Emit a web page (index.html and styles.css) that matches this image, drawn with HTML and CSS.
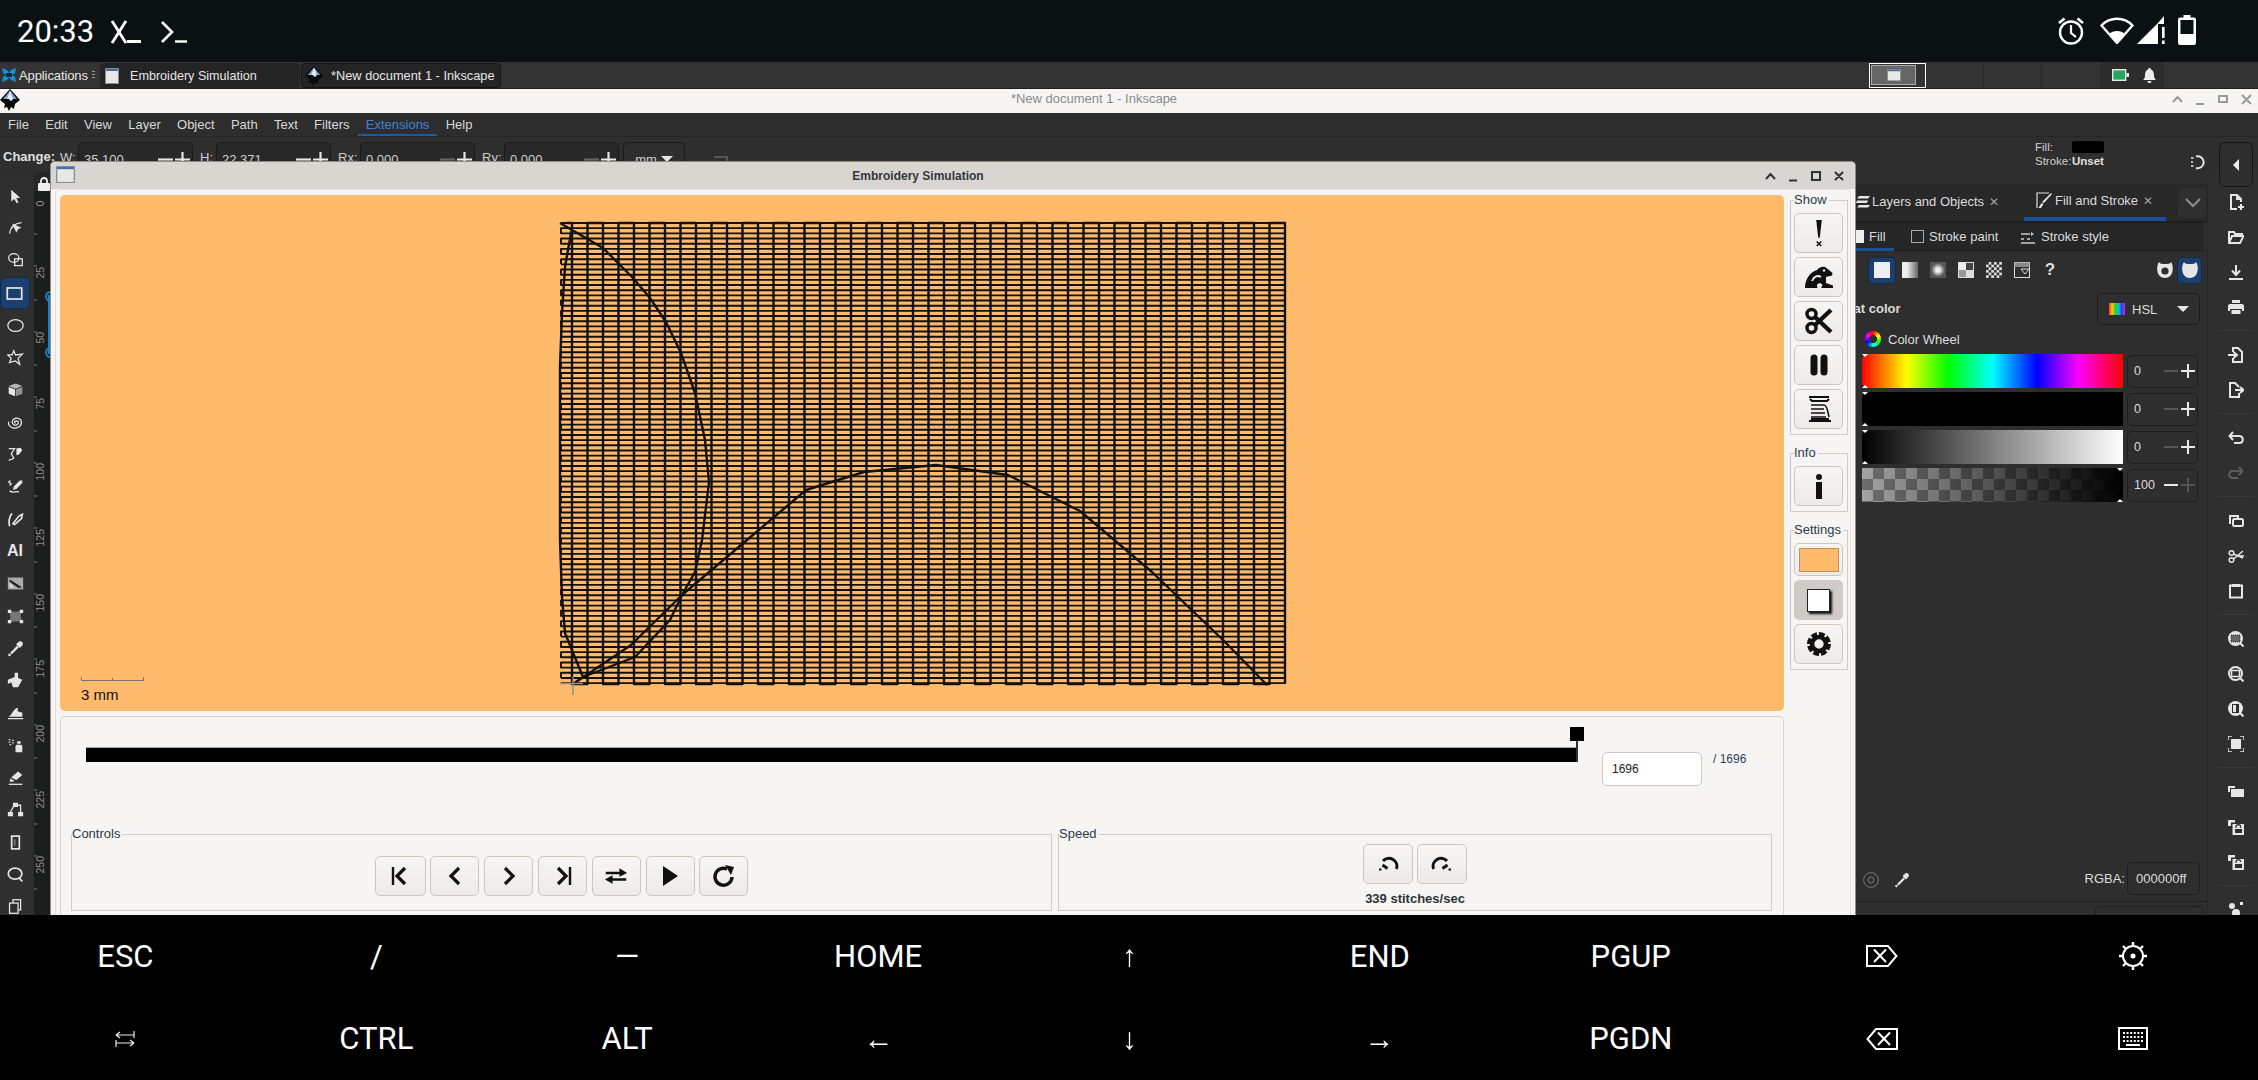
FILE: index.html
```html
<!DOCTYPE html>
<html lang="en">
<head>
<meta charset="utf-8">
<title>Embroidery Simulation</title>
<link rel="stylesheet" href="styles.css">
</head>
<body>
<svg class="sprite" aria-hidden="true">
  <symbol id="minus" viewBox="0 0 14 14"><path d="M0 7h14" stroke="currentColor" stroke-width="2"/></symbol>
  <symbol id="plus" viewBox="0 0 14 14"><path d="M0 7h14M7 0v14" stroke="currentColor" stroke-width="2"/></symbol>
  <symbol id="win" viewBox="0 0 14 16" preserveAspectRatio="none"><rect width="14" height="16" fill="#e8e8e4"/><rect width="14" height="3" fill="#3d6fb4"/><rect x=".5" y=".5" width="13" height="15" fill="none" stroke="#8a9099"/></symbol>
  <symbol id="logo" viewBox="0 0 20 22"><path d="M10 0 20 11 15 15 14 20 11 18 9 22 7 18 4 19 5 15 0 11Z" fill="#0a0a0a"/><path d="M10 1.5 17 10 13 10 11 12 9 10 3 10Z" fill="#7d9ed0"/><path d="M10 1.5 13 10 11 12 9 10 7 10Z" fill="#e8eef8"/></symbol>
  <symbol id="dropper" viewBox="0 0 16 16"><path d="M10 2.5 13.5 6 12 7.5 8.5 4Z M9.5 5.5 11 7 4.5 13.5 3 12Z" fill="currentColor"/><circle cx="12.5" cy="3.5" r="2.4" fill="currentColor"/><circle cx="2.4" cy="14" r="1.2" fill="currentColor"/></symbol>
</svg>

<header class="statusbar">
  <span class="clock">20:33</span>
  <svg class="st-x" viewBox="0 0 32 24"><path d="M2 1 16 23M16 1 2 23" stroke="#fff" stroke-width="2.8"/><path d="M17 21.5h14" stroke="#fff" stroke-width="3"/></svg>
  <svg class="st-t" viewBox="0 0 28 24"><path d="M2 2 12 12 2 22" stroke="#fff" stroke-width="2.6" fill="none"/><path d="M15 21.5h12" stroke="#fff" stroke-width="2.4"/></svg>
  <span class="st-space"></span>
  <svg class="st-alarm" viewBox="0 0 28 28"><circle cx="14" cy="15.5" r="11" fill="none" stroke="#fff" stroke-width="2.4"/><path d="M14 8v8l5 4" fill="none" stroke="#fff" stroke-width="2.2"/><path d="M2 6 7.5 1.5M26 6 20.5 1.5" stroke="#fff" stroke-width="2.6"/></svg>
  <svg class="st-wifi" viewBox="0 0 34 28"><path d="M1.5 9.5C10 .5 24 .5 32.5 9.5L17 27Z" fill="none" stroke="#fff" stroke-width="2.4"/><path d="M9 18C13 14 21 14 25 18L17 27Z" fill="#fff"/></svg>
  <svg class="st-sig" viewBox="0 0 28 28"><path d="M0 28 21 7V28Z" fill="#fff"/><path d="M21 7 27 0V8H21Z" fill="#fff"/><path d="M25 11h2.6v11H25ZM25 24.5h2.6V28H25Z" fill="#fff"/><path d="M22.6 9v19" stroke="#0a1112" stroke-width="2"/></svg>
  <svg class="st-bat" viewBox="0 0 18 30"><path d="M5.5 0h7v2.5h3.5a2 2 0 0 1 2 2V28a2 2 0 0 1-2 2H2a2 2 0 0 1-2-2V4.500a2 2 0 0 1 2-2h3.500Z" fill="#fff"/><rect x="2.500" y="5" width="13" height="14" fill="#0a1112"/></svg>
</header>

<main class="desktop">
  <section class="inkscape">
    <div class="panel">
      <svg class="xfce" viewBox="0 0 16 16"><path d="M1 1 6 3 8 6 10 3 15 1 14 6 11 8 14 10 15 15 10 13 8 10 6 13 1 15 2 10 5 8 2 6Z" fill="#1192d8"/><path d="M5 6h6v4H5Z" fill="#0c2a3c"/></svg>
      <span class="apps">Applications</span>
      <span class="grip"></span>
      <div class="task"><svg class="task-ic"><use href="#win"/></svg><span>Embroidery Simulation</span></div>
      <div class="task task-2"><svg class="task-logo"><use href="#logo"/></svg><span>*New document 1 - Inkscape</span></div>
      <div class="pager"><div class="pager-in"><svg class="pager-ic"><use href="#win"/></svg></div></div>
      <span class="pn-sep pn-sep-a"></span>
      <span class="pn-sep pn-sep-b"></span>
      <div class="tray">
        <svg class="tray-bat" viewBox="0 0 17 12"><rect x=".7" y=".7" width="13" height="10.600" fill="#1fa85c" stroke="#e8e8e8" stroke-width="1.400"/><rect x="14.500" y="4" width="2.500" height="4" fill="#e8e8e8"/></svg>
        <svg class="tray-bell" viewBox="0 0 13 15"><path d="M6.500 0C7.500 0 8 .7 8 1.500 10.500 2.500 11 5 11 7.500 11 10 12 11 13 12H0C1 11 2 10 2 7.500 2 5 2.500 2.500 5 1.500 5 .7 5.500 0 6.500 0ZM4.500 13h4C8.500 14.500 7.500 15 6.500 15S4.500 14.500 4.500 13Z" fill="#eee"/></svg>
      </div>
    </div>

    <div class="titlebar">
      <svg class="tb-logo"><use href="#logo"/></svg>
      <span class="tb-title">*New document 1 - Inkscape</span>
      <svg class="tb-btns" viewBox="0 0 80 12"><path d="M1 9 5.500 4 10 9M24 11H32M47 3H55V9H47ZM70 2 79 11M79 2 70 11" fill="none" stroke="#9a9a9a" stroke-width="2"/></svg>
    </div>

    <nav class="menubar">
      <span class="mi">File</span><span class="mi">Edit</span><span class="mi">View</span><span class="mi">Layer</span><span class="mi">Object</span><span class="mi">Path</span><span class="mi">Text</span><span class="mi">Filters</span><span class="mi mi-on">Extensions</span><span class="mi">Help</span>
    </nav>

    <div class="toolrow">
      <b class="tr-change">Change:</b>
      <span class="tr-l">W:</span>
      <div class="tr-f"><span>35.100</span><svg class="tr-pm"><use href="#minus"/></svg><svg class="tr-pm"><use href="#plus"/></svg></div>
      <span class="tr-l tr-h">H:</span>
      <div class="tr-f"><span>22.371</span><svg class="tr-pm"><use href="#minus"/></svg><svg class="tr-pm"><use href="#plus"/></svg></div>
      <span class="tr-l tr-r">Rx:</span>
      <div class="tr-f"><span>0.000</span><svg class="tr-pm dim"><use href="#minus"/></svg><svg class="tr-pm"><use href="#plus"/></svg></div>
      <span class="tr-l tr-r">Ry:</span>
      <div class="tr-f"><span>0.000</span><svg class="tr-pm dim"><use href="#minus"/></svg><svg class="tr-pm"><use href="#plus"/></svg></div>
      <div class="tr-unit">mm <i class="caret"></i></div>
      <svg class="tr-snap" viewBox="0 0 14 14"><path d="M0 1H13V14" fill="none" stroke="#666" stroke-width="1.500"/></svg>
      <span class="tr-space"></span>
      <div class="fs-ind">
        <span>Fill:</span><i class="fs-swatch"></i>
        <span>Stroke:</span><b>Unset</b>
      </div>
      <svg class="snap" viewBox="0 0 16 16"><path d="M6 2.500A6 6 0 1 1 6 14" fill="none" stroke="#e6e6e6" stroke-width="2"/><path d="M1 4h2.500M1 8h2M1 12h2.500" stroke="#e6e6e6" stroke-width="1.500"/></svg>
      <div class="collapse"><i class="tri-left"></i></div>
    </div>

    <div class="workspace">
      <aside class="tools">
        <div class="tool"><svg viewBox="0 0 20 20"><path class="f" d="M5 2V16L8.500 13 11.500 18 13.500 17 11 12 15.500 11.500Z"/></svg></div>
        <div class="tool"><svg viewBox="0 0 20 20"><path class="s" d="M3 16C4 8 8 4 17 3"/><path class="f" d="M6 4 17 9 13 11 11 15Z"/></svg></div>
        <div class="tool"><svg viewBox="0 0 20 20"><ellipse class="s" cx="8" cy="7" rx="6" ry="5"/><rect class="s" x="9" y="8" width="9" height="8"/></svg></div>
        <div class="tool tool-on"><svg viewBox="0 0 20 20"><rect class="s2" x="1.500" y="3.500" width="17" height="13"/></svg></div>
        <div class="tool"><svg viewBox="0 0 20 20"><ellipse class="s" cx="10" cy="10" rx="9" ry="7"/></svg></div>
        <div class="tool"><svg viewBox="0 0 20 20"><path class="s" d="M8 2 10 7 18 6 13 11 15 18 9.500 14 3 16 5 11 1 7 6 7Z"/></svg></div>
        <div class="tool"><svg viewBox="0 0 20 20"><path class="f" d="M10 3 18 6 10 9 2 6Z" opacity=".75"/><path class="f" d="M2 7 9.500 10V18L2 15Z"/><path class="f" d="M18 7V15L10.500 18V10Z" opacity=".55"/></svg></div>
        <div class="tool"><svg viewBox="0 0 20 20"><path class="s" d="M10 11C8 10 9 8 11 8 14 8 14 12 11 13 7 14 5 10 7 7 10 3 17 5 17 10 17 15 11 18 6 16 3 15 1 12 2 9"/></svg></div>
        <div class="tool"><svg viewBox="0 0 20 20"><path class="s" d="M2 3H9L5 9 8 14C6 17 3 15 2 17"/><path class="f" d="M11 3 16 2 18 5 14 10 11 11Z"/></svg></div>
        <div class="tool"><svg viewBox="0 0 20 20"><path class="f" d="M8 10 15 3 18 3 18 6 11 13 7 14Z"/><path class="s" d="M4 3 2 5 5 7 3 9M3 15C6 18 9 16 14 16"/></svg></div>
        <div class="tool"><svg viewBox="0 0 20 20"><path class="s2" d="M6 3C2 6 2 14 3 18M7 15 14 6 18 4 17 9 9 16Z"/></svg></div>
        <div class="tool"><span class="tool-txt">AI</span></div>
        <div class="tool"><svg viewBox="0 0 20 20"><rect x="1" y="3" width="18" height="14" fill="#aaa"/><path d="M3 5 17 14V15H13L3 8Z" fill="#222"/><path d="M3 9 9 15H3Z" fill="#ddd"/></svg></div>
        <div class="tool"><svg viewBox="0 0 20 20"><path d="M3 4H17L16 10 18 16H3L4 10Z" fill="#777"/><path class="f" d="M1 2h4v4H1ZM15 2h4v4h-4ZM1 14h4v4H1ZM15 14h4v4h-4Z"/></svg></div>
        <div class="tool"><svg viewBox="0 0 20 20"><use href="#dropper"/></svg></div>
        <div class="tool"><svg viewBox="0 0 20 20"><path class="f" d="M1 9 9 6 9 1 13 1 13 7 18 9 13 18 7 18 5 12 1 14Z"/></svg></div>
        <div class="tool"><svg viewBox="0 0 20 20"><path class="f" d="M1 15C5 15 6 8 11 5 13 4 14 6 12 8 14 9 16 10 18 10V15ZM1 16.500H19V18H1Z"/></svg></div>
        <div class="tool"><svg viewBox="0 0 20 20"><path class="f" d="M11 9H17L18 11V18H10V11ZM12 5H16V8H12Z"/><path d="M2 3h2M6 4h2M2 6h2M6 7h2M3 9h2" stroke="#ddd" stroke-width="1.400"/></svg></div>
        <div class="tool"><svg viewBox="0 0 20 20"><path class="f" d="M13 3 18 7 11 13 5 10Z"/><path d="M4 11 9 14 7 15H3Z" fill="#ddd"/><path class="s" d="M2 18H18"/></svg></div>
        <div class="tool"><svg viewBox="0 0 20 20"><path class="f" d="M7 2h6v5H7ZM1 13h6v5H1ZM13 13h6v5h-6Z"/><path class="s" d="M8 6 4 13M13 5H16V13"/></svg></div>
        <div class="tool"><svg viewBox="0 0 20 20"><rect class="s2" x="5.500" y="2.500" width="9" height="15"/><path d="M8 6h2v8H8Z" fill="#777"/></svg></div>
        <div class="tool"><svg viewBox="0 0 20 20"><ellipse class="s2" cx="9.500" cy="9" rx="8" ry="6.500"/><path class="s2" d="M14 14 18 18"/></svg></div>
        <div class="tool"><svg viewBox="0 0 20 20"><rect class="s" x="7" y="2" width="9" height="12"/><rect x="3" y="6" width="10" height="12" fill="#2e2e2e" stroke="#e6e6e6" stroke-width="1.500"/></svg></div>
      </aside>
      <div class="rulecol">
        <div class="lock"><svg viewBox="0 0 12 14"><path d="M3 6V4a3 3 0 0 1 6 0V6" fill="none" stroke="#eee" stroke-width="1.800"/><rect y="6" width="12" height="8" rx="1" fill="#eee"/></svg></div>
        <div class="ruler">
          <span class="rk">0</span><span class="rk">25</span><span class="rk">50</span><span class="rk">75</span><span class="rk">100</span><span class="rk">125</span><span class="rk">150</span><span class="rk">175</span><span class="rk">200</span><span class="rk">225</span><span class="rk">250</span>
          <i class="rmark"></i>
        </div>
      </div>
      <div class="canvas-bg"></div>

      <section class="dock">
        <div class="dock-tabs">
          <div class="dt dt-layers">
            <svg class="dt-ic" viewBox="0 0 14 14"><path d="M3 1H14L12 3.500H1ZM1 5.500H12L11 8H0ZM3 10H14L12 12.500H1Z" fill="#e6e6e6"/></svg>
            <span>Layers and Objects</span><span class="dt-x">✕</span>
          </div>
          <div class="dt dt-fill">
            <svg class="dt-ic2" viewBox="0 0 16 17"><path d="M13 1H1V16" fill="none" stroke="#ddd" stroke-width="1.200"/><path d="M15 1 16 2 8 11 6 10ZM5.500 11 7.500 12 5 16H2.500Z" fill="#e6e6e6"/></svg>
            <span>Fill and Stroke</span><span class="dt-x">✕</span>
          </div>
          <div class="dt-more"><svg viewBox="0 0 16 10"><path d="M1 1 8 8 15 1" fill="none" stroke="#8e8e8e" stroke-width="2"/></svg></div>
        </div>
        <div class="subtabs">
          <div class="st st-on"><i class="sq sq-w"></i><span>Fill</span></div>
          <div class="st st-paint"><i class="sq"></i><span>Stroke paint</span></div>
          <div class="st st-style"><svg class="st-ic" viewBox="0 0 14 14"><path d="M0 4h9M0 9h3M6 9h3M0 13h14" stroke="#ccc" stroke-width="1.300" fill="none"/><path d="M10 2l3 2-3 2Z" fill="#ccc"/></svg><span>Stroke style</span></div>
        </div>
        <div class="modes">
          <div class="mode mode-on"><i class="flat"></i></div>
          <div class="mode"><i class="m-grad"></i></div>
          <div class="mode"><i class="m-rad"></i></div>
          <div class="mode"><i class="m-mesh"></i></div>
          <div class="mode"><i class="m-pat"></i></div>
          <div class="mode"><svg class="m-svg" viewBox="0 0 16 16"><rect x=".5" y=".5" width="15" height="15" fill="none" stroke="#ddd"/><path d="M.5 .5H15.500V5H.5Z" fill="#888"/><path d="M7 7 15 7 11 12Z" fill="none" stroke="#ddd"/></svg></div>
          <div class="mode mode-q">?</div>
          <span class="modes-space"></span>
          <div class="mode mode-rule"><svg viewBox="0 0 18 18"><path d="M3 1C0 5 0 17 9 17S18 5 15 1C14 3 12 3 9 3S4 3 3 1Z" fill="#e6e6e6"/><circle cx="9" cy="10" r="3.600" fill="#2e2e2e"/></svg></div>
          <div class="mode mode-rule mode-on"><svg viewBox="0 0 18 18"><path d="M3 1C0 5 0 17 9 17S18 5 15 1C14 3 12 3 9 3S4 3 3 1Z" fill="#e6e6e6"/></svg></div>
        </div>
        <div class="flat-row">
          <b>Flat color</b>
          <div class="dd"><i class="dd-rb"></i><span>HSL</span><i class="caret"></i></div>
        </div>
        <div class="wheel-row"><i class="wheel"></i><span>Color Wheel</span></div>
        <div class="cs-row"><div class="cs cs-h"></div><div class="spin"><span>0</span><svg class="pm dim"><use href="#minus"/></svg><svg class="pm"><use href="#plus"/></svg></div></div>
        <div class="cs-row"><div class="cs cs-s"></div><div class="spin"><span>0</span><svg class="pm dim"><use href="#minus"/></svg><svg class="pm"><use href="#plus"/></svg></div></div>
        <div class="cs-row"><div class="cs cs-l"></div><div class="spin"><span>0</span><svg class="pm dim"><use href="#minus"/></svg><svg class="pm"><use href="#plus"/></svg></div></div>
        <div class="cs-row"><div class="cs cs-a"></div><div class="spin"><span>100</span><svg class="pm"><use href="#minus"/></svg><svg class="pm dim"><use href="#plus"/></svg></div></div>
        <div class="rgba-row">
          <svg class="target" viewBox="0 0 16 16"><circle cx="8" cy="8" r="7.400" fill="none" stroke="#777"/><circle cx="8" cy="8" r="3" fill="none" stroke="#777"/></svg>
          <svg class="drop"><use href="#dropper"/></svg>
          <span class="rgba-space"></span>
          <span>RGBA:</span>
          <div class="rgba-in">000000ff</div>
        </div>
        <div class="blend-row"><div class="blend"></div></div>
      </section>

      <aside class="cmds">
        <div class="cmd"><svg viewBox="0 0 16 16"><path class="s2" d="M9 15H3V1H9L13 5V8M9 1V5H13"/><path class="s2" d="M10 13h6M13 10v6"/></svg></div>
        <div class="cmd"><svg viewBox="0 0 16 16"><path class="s2" d="M1 13V3H6L7 5H14V7M1 14H12L15.500 7H4Z"/></svg></div>
        <div class="cmd"><svg viewBox="0 0 16 16"><path class="s2" d="M8 1V10M4 6.500 8 11 12 6.500M1 15H15"/></svg></div>
        <div class="cmd"><svg viewBox="0 0 16 16"><path class="f" d="M4 1H12V4H4ZM2 5H14A2 2 0 0 1 16 7V12H14V10H2V12H0V7A2 2 0 0 1 2 5ZM3.500 11H12.500V15H3.500Z"/></svg></div>
        <i class="cmd-sep"></i>
        <div class="cmd"><svg viewBox="0 0 16 16"><path class="s2" d="M5 5V1H10L14 5V15H5V11M0 8H8M5.500 5 9 8 5.500 11"/></svg></div>
        <div class="cmd"><svg viewBox="0 0 16 16"><path class="s2" d="M11 5V5L7 1H2V15H11V11M7 8H15M12 5 15.500 8 12 11"/></svg></div>
        <i class="cmd-sep"></i>
        <div class="cmd"><svg viewBox="0 0 16 16"><path class="s2" d="M5 2 1.500 6 5 10M2 6H11C16 6 16 13 11 13H6"/></svg></div>
        <div class="cmd cmd-dim"><svg viewBox="0 0 16 16"><path class="s2" d="M11 2 14.500 6 11 10M14 6H5C0 6 0 13 5 13H10"/></svg></div>
        <i class="cmd-sep"></i>
        <div class="cmd"><svg viewBox="0 0 16 16"><path class="s2" d="M3 10H2V3H10V5"/><rect class="s2" x="5" y="6" width="10" height="7" rx="1.500"/></svg></div>
        <div class="cmd"><svg viewBox="0 0 16 16"><circle class="s" cx="3.500" cy="5" r="2.300"/><circle class="s" cx="3.500" cy="12" r="2.300"/><path class="s" d="M5.500 6 15 10M5.500 11 15 3M8 8H16"/></svg></div>
        <div class="cmd"><svg viewBox="0 0 16 16"><path class="s2" d="M4 2.500H2V14.500H14V2.500H12"/><path class="f" d="M4 1H12V4H4Z"/></svg></div>
        <i class="cmd-sep"></i>
        <div class="cmd"><svg viewBox="0 0 16 16"><circle class="f" cx="7.500" cy="7.500" r="7.500"/><rect x="3" y="4" width="9" height="7" fill="#666" stroke="#2e2e2e" stroke-dasharray="1 1"/><path class="s2" d="M12 12 15.500 15.500"/></svg></div>
        <div class="cmd"><svg viewBox="0 0 16 16"><circle class="s2" cx="7.500" cy="7.500" r="6.500"/><rect class="s" x="3.500" y="4.500" width="8" height="6"/><path class="s2" d="M12 12 15.500 15.500"/></svg></div>
        <div class="cmd"><svg viewBox="0 0 16 16"><circle class="f" cx="7.500" cy="7.500" r="7.500"/><rect x="4" y="3" width="7" height="9" fill="#2e2e2e"/><rect x="5" y="4" width="3" height="7" fill="#e6e6e6"/><path class="s2" d="M12 12 15.500 15.500"/></svg></div>
        <div class="cmd"><svg viewBox="0 0 16 16"><rect class="f" x="3" y="3" width="10" height="10"/><path class="s" d="M0 4V0H4M12 0H16V4M16 12V16H12M4 16H0V12" stroke="#999"/></svg></div>
        <i class="cmd-sep"></i>
        <div class="cmd"><svg viewBox="0 0 16 16"><path class="f" d="M0 2H7V4H2V8H0ZM3 5H16V13H3Z"/></svg></div>
        <div class="cmd"><svg viewBox="0 0 16 16"><path class="f" d="M0 1H7V3.500H3V7H0ZM4.500 5H16V16H4.500Z"/><path d="M8 9V8a2.300 2.300 0 0 1 4.600 0V9" fill="none" stroke="#2e2e2e" stroke-width="1.200"/><rect x="7" y="10" width="7" height="4" fill="#2e2e2e"/></svg></div>
        <div class="cmd"><svg viewBox="0 0 16 16"><path class="f" d="M0 1H7V3.500H3V7H0ZM4.500 5H16V16H4.500Z"/><path d="M8 9V8a2.300 2.300 0 0 1 4.600 0" fill="none" stroke="#2e2e2e" stroke-width="1.200"/><rect x="7" y="10" width="7" height="4" fill="#2e2e2e"/></svg></div>
        <i class="cmd-sep"></i>
        <div class="cmd"><svg viewBox="0 0 16 16"><circle class="f" cx="4" cy="4" r="3"/><circle class="f" cx="8" cy="11" r="4"/><path class="f" d="M12 0h3v3h-3Z"/></svg></div>
      </aside>
    </div>
  </section>

  <section class="sim">
    <div class="sim-title">
      <svg class="sim-ic"><use href="#win"/></svg>
      <b>Embroidery Simulation</b>
      <svg class="sim-btns" viewBox="0 0 80 12"><path d="M1 9 5.500 4 10 9M24 10.500H32M47 2H55V10H47ZM70 2 78 10M78 2 70 10" fill="none" stroke="#2e3436" stroke-width="2"/></svg>
    </div>
    <div class="sim-frame">
      <div class="sim-main">
        <div class="stage">
          <svg class="stitches" viewBox="60 195 1724 516">
            <defs>
              <path id="hb" class="thread thin" d="M561 223h724v5.170h-724v5.170h724v5.170h-724v5.170h724v5.170h-724v5.170h724v5.170h-724v5.170"/>
              <path id="vb" class="thread" d="M572 223v461h15.500v-461h15.500v461h15.500v-461h15.500v461h15.500v-461h15.500v461h15.500v-461h15.500"/>
            </defs>
            <use href="#hb"/><use href="#hb" y="41.360"/><use href="#hb" y="82.720"/><use href="#hb" y="124.080"/><use href="#hb" y="165.440"/><use href="#hb" y="206.800"/><use href="#hb" y="248.160"/><use href="#hb" y="289.520"/><use href="#hb" y="330.880"/><use href="#hb" y="372.240"/><use href="#hb" y="413.600"/>
            <path class="thread thin" d="M561 677.960h724v5.170h-724"/>
            <use href="#vb"/><use href="#vb" x="124"/><use href="#vb" x="248"/><use href="#vb" x="372"/><use href="#vb" x="496"/>
            <path class="thread" d="M567 223h5M1192 223v461h15.500v-461h15.500v461h15.500v-461h15.500v461h15.500v-461h15.500v461"/>
            <path class="thread" d="M560 223 603 248 633 278 650 298 666 322 681 353 695 393 705 440 709 482 702 540 695 572 682 595 670 620 635 657 583 677 573 684 631 645 682 595 747 540 806 490 864 472 936 465 1008 475 1080 511 1152 572 1224 641 1267 685M572 228 568 250 565 267 562 313 560 367 560 540 562 597 565 633 583 677"/>
            <path class="cross" d="M560 683.500H583M573 677V695"/>
            <path class="ruler-mark" d="M81.500 677V680.500H143.500V677M112.500 678V680.500"/>
            <text class="scale-txt" x="81" y="700">3 mm</text>
          </svg>
        </div>
        <div class="scrub">
          <div class="scrub-top">
            <div class="slider"><div class="bar"></div><i class="handle"></i></div>
            <div class="num">1696</div>
            <span class="of">/ 1696</span>
          </div>
          <div class="ctl-row">
            <fieldset class="frame f-ctl">
              <legend>Controls</legend>
              <div class="ctl-btns">
                <button class="btn b-first"><svg viewBox="0 0 24 24"><path d="M5 3V21" stroke-width="2.400"/><path d="M17 4 9 12 17 20" stroke-width="3.200"/></svg></button>
                <button class="btn"><svg viewBox="0 0 24 24"><path d="M16 4 8 12 16 20" stroke-width="3.200"/></svg></button>
                <button class="btn"><svg viewBox="0 0 24 24"><path d="M8 4 16 12 8 20" stroke-width="3.200"/></svg></button>
                <button class="btn"><svg viewBox="0 0 24 24"><path d="M7 4 15 12 7 20" stroke-width="3.200"/><path d="M19 3V21" stroke-width="2.400"/></svg></button>
                <button class="btn"><svg viewBox="0 0 28 24"><path d="M2 8.500H20M8 16H26" stroke-width="3"/><path class="solid" d="M18 3 27 8.500 18 13ZM10 11 1 16 10 21Z"/></svg></button>
                <button class="btn"><svg viewBox="0 0 24 24"><path class="solid" d="M5 2 20 12 5 22Z"/></svg></button>
                <button class="btn"><svg viewBox="0 0 24 24"><path d="M20 13A8.500 8.500 0 1 1 15 5" stroke-width="3.400"/><path class="solid" d="M13 1 22 3 19 11Z"/></svg></button>
              </div>
            </fieldset>
            <fieldset class="frame f-spd">
              <legend>Speed</legend>
              <div class="spd-btns">
                <button class="btn"><svg viewBox="0 0 24 24"><path d="M7 9A8 8 0 0 1 20.500 17" stroke-width="3"/><path d="M11.500 16.500 6.500 13" stroke-width="3"/><path d="M3 17.500h2.500" stroke-width="2"/></svg></button>
                <button class="btn"><svg viewBox="0 0 24 24"><path d="M3.500 17A8 8 0 0 1 17 9" stroke-width="3"/><path d="M12.500 16.500 17.500 13" stroke-width="3"/><path d="M18.500 17.500h2.500" stroke-width="2"/></svg></button>
              </div>
              <b class="spd-txt">339 stitches/sec</b>
            </fieldset>
          </div>
        </div>
      </div>
      <aside class="sim-side">
        <fieldset class="frame side-f">
          <legend>Show</legend>
          <button class="btn side-b"><svg viewBox="0 0 28 30"><path class="solid" d="M11 1H17L14.800 20H13.200Z"/><path d="M11.500 24 16.500 29M16.500 24 11.500 29" stroke-width="1.500"/></svg></button>
          <button class="btn side-b"><svg viewBox="0 0 28 22"><path class="solid" d="M0 22C0 13 5 6 12 4 14 1 19-.5 21.500 2L27.500 7 27 9.500 21 11V17L28 19.500V22H16L17.500 19C16 16.500 13 17 12 19L12.500 22Z"/><circle cx="19" cy="4.500" r="1.200" fill="#f2f1ef" stroke="none"/><path d="M7 15C9 10 13 9 16 11" stroke="#f2f1ef" stroke-width="1.800"/></svg></button>
          <button class="btn side-b"><svg viewBox="0 0 28 28"><circle cx="6.500" cy="7" r="4.500" stroke-width="3.400"/><circle cx="6.500" cy="21" r="4.500" stroke-width="3.400"/><path d="M10 18 26 3M10 10 26 25" stroke-width="4.400"/></svg></button>
          <button class="btn side-b"><svg viewBox="0 0 28 28"><path d="M9 7V21M19 7V21" stroke-width="7" stroke-linecap="round"/></svg></button>
          <button class="btn side-b"><svg viewBox="0 0 28 28"><path d="M4 2H24M5 4 7 6H22L24 4M4 26H26M6 24H24" stroke-width="2"/><path d="M6 10H19C22 10 23 17 24 22M6 14H19M6 18H20M6 22H21" stroke-width="1.600"/></svg></button>
        </fieldset>
        <fieldset class="frame side-f">
          <legend>Info</legend>
          <button class="btn side-b"><svg viewBox="0 0 28 28"><circle class="solid" cx="14" cy="5" r="3"/><path class="solid" d="M11 10H17V27H11Z"/></svg></button>
        </fieldset>
        <fieldset class="frame side-f">
          <legend>Settings</legend>
          <button class="btn side-b side-sw"><i class="swatch"></i></button>
          <button class="btn side-b side-sel"><i class="shadow-sq"></i></button>
          <button class="btn side-b"><svg viewBox="0 0 28 28"><circle cx="14" cy="14" r="7" stroke-width="4.600"/><circle cx="14" cy="14" r="10" stroke-width="4" stroke-dasharray="5.800 2"/></svg></button>
        </fieldset>
      </aside>
    </div>
  </section>
</main>

<footer class="keys">
  <span class="key">ESC</span>
  <span class="key">/</span>
  <span class="key">—</span>
  <span class="key">HOME</span>
  <span class="key key-a">↑</span>
  <span class="key">END</span>
  <span class="key">PGUP</span>
  <span class="key"><svg class="k-del" viewBox="0 0 32 22"><path d="M1 1H22L30.500 11 22 21H1Z" fill="none" stroke="#fff" stroke-width="2"/><path d="M8 4.500 20 17M20 4.500 8 17" stroke="#fff" stroke-width="2"/></svg></span>
  <span class="key"><svg class="k-gear" viewBox="0 0 28 28"><circle cx="14" cy="14" r="10" fill="none" stroke="#fff" stroke-width="2"/><circle cx="14" cy="14" r="2.500" fill="#fff"/><path d="M14 0V4M14 24V28M0 14H4M24 14H28M4 4 7 7M24 4 21 7M4 24 7 21M24 24 21 21" stroke="#fff" stroke-width="2.400"/></svg></span>
  <span class="key"><svg class="k-tab" viewBox="0 0 20 16"><path d="M1 4H19M19 0V7M1 4 5 1M1 4 5 7M19 12H1M1 9V16M19 12 15 9M19 12 15 15" fill="none" stroke="#eee" stroke-width="1.200"/></svg></span>
  <span class="key">CTRL</span>
  <span class="key">ALT</span>
  <span class="key key-a">←</span>
  <span class="key key-a">↓</span>
  <span class="key key-a">→</span>
  <span class="key">PGDN</span>
  <span class="key"><svg class="k-del" viewBox="0 0 32 22"><path d="M31 1H10L1.500 11 10 21H31Z" fill="none" stroke="#fff" stroke-width="2"/><path d="M12 4.500 24 17M24 4.500 12 17" stroke="#fff" stroke-width="2"/></svg></span>
  <span class="key"><svg class="k-kbd" viewBox="0 0 30 23"><rect x="1" y="1" width="28" height="21" fill="none" stroke="#fff" stroke-width="2"/><path d="M5 6h20M5 10h20M5 14h20" stroke="#fff" stroke-width="2" stroke-dasharray="2 1.600"/><path d="M8 18h14" stroke="#fff" stroke-width="2"/></svg></span>
</footer>
</body>
</html>
```
FILE: styles.css
```css
* { box-sizing: border-box; }
html, body { margin: 0; padding: 0; }
body {
  width: 2258px; height: 1080px; overflow: hidden;
  display: flex; flex-direction: column;
  background: #000;
  font-family: "Liberation Sans", Arial, sans-serif;
  font-size: 13px;
}
.sprite { width: 0; height: 0; position: absolute; }

/* Android status bar */
.statusbar {
  height: 62px; background: #0a1112; color: #fff;
  display: flex; align-items: center; padding-left: 17px; flex: none;
}
.clock { font-family: Roboto, sans-serif; font-size: 31px; width: 93px; }
.st-x { width: 32px; height: 24px; margin-top: 1px; }
.st-t { width: 28px; height: 24px; margin-left: 18px; margin-top: 1px; }
.st-space { flex: 1; }
.st-alarm { width: 28px; height: 28px; margin-top: -1px; }
.st-wifi { width: 34px; height: 28px; margin-left: 15px; margin-top: -2px; }
.st-sig { width: 28px; height: 28px; margin-left: 3px; margin-top: -2px; }
.st-bat { width: 18px; height: 30px; margin-left: 13px; margin-right: 62px; margin-top: -2px; }

.desktop { flex: 1; position: relative; overflow: hidden; min-height: 0; }
.inkscape { height: 100%; display: flex; flex-direction: column; background: #2e2e2e; color: #dcdcdc; }

/* XFCE panel */
.panel {
  height: 27px; flex: none; background: #333; color: #e6e6e6;
  border-bottom: 1px solid #1e1e1e;
  display: flex; align-items: center; position: relative;
}
.xfce { width: 16px; height: 16px; margin-left: 1px; }
.apps { margin-left: 2px; width: 72px; font-size: 13px; letter-spacing: -.1px; white-space: nowrap; }
.grip { width: 3px; height: 9px; margin: 0 5px 0 1px; background: repeating-linear-gradient(#999 0 1px, transparent 1px 3px); }
.task {
  width: 200px; height: 25px; background: #242424; border-radius: 4px;
  display: flex; align-items: center; padding-left: 5px; gap: 11px; margin-top: 1px;
  font-size: 12.600px; white-space: nowrap;
}
.task-2 { margin-left: 1px; gap: 8px; padding-left: 3px; border: 1px solid #151515; font-size: 12.800px; }
.task-ic { width: 14px; height: 16px; }
.task-logo { width: 18px; height: 20px; }
.pager { margin-left: 1368px; width: 57px; height: 25px; border: 1px solid #fff; padding: 1px 0 0 1px; }
.pager-in { width: 45px; height: 20px; background: #666; border: 1px solid #aaa; display: flex; align-items: center; justify-content: center; }
.pager-ic { width: 14px; height: 12px; }
.pn-sep { width: 1px; height: 26px; background: #262626; }
.pn-sep-a { margin-left: 57px; }
.pn-sep-b { margin-left: 57px; }
.tray { margin-left: 58px; width: 64px; height: 26px; background: #2c2c2c; display: flex; align-items: center; padding-left: 12px; gap: 14px; }
.tray-bat { width: 17px; height: 12px; }
.tray-bell { width: 13px; height: 15px; }

/* Inkscape title */
.titlebar { height: 24px; flex: none; background: #f6f5f4; display: flex; align-items: flex-start; position: relative; }
.tb-logo { width: 20px; height: 22px; }
.tb-title { position: absolute; left: 0; right: 70px; text-align: center; top: 2px; font-size: 13px; color: #8a8a8a; }
.tb-btns { position: absolute; right: 6px; top: 4px; width: 80px; height: 12px; }

.menubar { height: 23px; flex: none; background: #2d2d2d; display: flex; padding-left: 8px; gap: 16.300px; font-size: 13px; align-items: center; }
.mi { color: #d8d8d8; position: relative; }
.mi-on { color: #3f83d6; }
.mi-on::after { content: ""; position: absolute; left: -8px; right: -8px; bottom: -5px; height: 3px; background: #1a5aa8; }

/* Tool controls */
.toolrow { height: 36px; flex: none; display: flex; align-items: flex-start; padding: 5px 0 0 3px; border-top: 1px solid #262626; position: relative; z-index: 1; }
.tr-change { font-size: 13px; margin-top: 7px; width: 57px; color: #e0e0e0; }
.tr-l { margin-top: 8px; color: #cfcfcf; width: 18px; }
.tr-h { width: 16px; }
.tr-r { width: 22px; }
.tr-f { width: 115px; height: 34px; background: #282828; border: 1px solid #1b1b1b; border-radius: 5px; margin-right: 7px; display: flex; align-items: center; padding: 0 2px 0 5px; gap: 2px; }
.tr-f span { flex: 1; color: #cfcfcf; }
.tr-pm { width: 15px; height: 15px; color: #e8e8e8; }
.tr-pm.dim { color: #666; }
.tr-unit { width: 62px; height: 34px; margin-left: -3px; background: #2e2e2e; border: 1px solid #1b1b1b; border-radius: 5px; display: flex; align-items: center; justify-content: center; gap: 4px; color: #cfcfcf; }
.caret { width: 0; height: 0; border-left: 6px solid transparent; border-right: 6px solid transparent; border-top: 6px solid #e6e6e6; }
.tr-snap { width: 14px; height: 14px; margin: 14px 0 0 29px; }
.tr-space { flex: 1; }
.fs-ind { display: grid; grid-template-columns: 37px 68px; width: 155px; font-size: 11.500px; line-height: 14px; color: #cfcfcf; margin-top: -2px; align-items: center; }
.fs-ind b { color: #e0e0e0; }
.fs-swatch { display: block; width: 32px; height: 12px; background: #000; border-radius: 2px; }
.snap { width: 16px; height: 16px; margin: 12px 13px 0 0; }
.collapse { width: 34px; height: 45px; border: 1px solid #151515; border-radius: 6px; background: #2e2e2e; margin-right: 5px; display: flex; align-items: center; justify-content: center; }
.tri-left { width: 0; height: 0; border-top: 6px solid transparent; border-bottom: 6px solid transparent; border-right: 6px solid #eee; }

/* Work area */
.workspace { flex: 1; min-height: 0; display: flex; }
.tools { width: 32px; flex: none; padding-top: 8px; background: #2f2f2f; }
.tool { height: 32.300px; display: flex; align-items: center; justify-content: center; padding-right: 2px; }
.tool svg { width: 17px; height: 17px; color: #e6e6e6; }
.tool-on { background: #1b3f6f; border: 1px solid #13294a; border-radius: 5px; width: 30px; }
.tool-txt { font-weight: 700; font-size: 16px; color: #e6e6e6; }
.s { fill: none; stroke: #e6e6e6; stroke-width: 1.500; }
.s2 { fill: none; stroke: #e6e6e6; stroke-width: 2; }
.f { fill: #e6e6e6; }
.rulecol { width: 18px; flex: none; margin-left: 2px; display: flex; flex-direction: column; }
.lock { height: 28px; padding-left: 4px; padding-top: 5px; background: #262626; border-radius: 5px 0 0 0; }
.lock svg { width: 12px; height: 14px; display: block; }
.ruler { flex: 1; background: #1c1e1e; padding-top: 10px; position: relative; }
.rk {
  display: block; height: 65.500px; color: #8d8d8d; font-size: 10.500px; padding-left: 3px; padding-top: 1px;
  writing-mode: vertical-rl; transform: rotate(180deg); text-align: right;
  background:
    linear-gradient(#777, #777) right 0 top 0 / 3px 1px no-repeat,
    linear-gradient(#777, #777) right 0 top 50% / 3px 1px no-repeat;
}
.rmark { position: absolute; left: 14px; top: 104px; width: 2px; height: 59px; background: #1b80c4; }
.rmark::before, .rmark::after { content: ""; position: absolute; left: -3px; width: 7px; height: 7px; border: 2px solid #1b80c4; border-radius: 50%; }
.rmark::before { top: -4px; }
.rmark::after { bottom: -4px; }
.canvas-bg { flex: 1; background: #fff; }

/* Dock */
.dock { width: 368px; flex: none; margin-top: 12px; background: #2e2e2e; display: flex; flex-direction: column; border-right: 1px solid #252525; color: #dcdcdc; }
.dock-tabs { height: 38px; flex: none; background: #282828; display: flex; align-items: center; padding-left: 16px; border-bottom: 1px solid #1e1e1e; }
.dt { display: flex; align-items: center; height: 100%; white-space: nowrap; font-size: 13px; }
.dt-layers { width: 168px; padding-bottom: 2px; }
.dt-fill { width: 142px; padding-left: 12px; border-bottom: 4px solid #1a4f96; }
.dt-ic { width: 14px; height: 14px; margin-right: 2px; flex: none; }
.dt-ic2 { width: 16px; height: 17px; margin-right: 3px; flex: none; }
.dt-x { color: #a0a0a0; font-size: 12px; font-weight: 700; margin-left: 5px; font-family: "DejaVu Sans", sans-serif; }
.dt-more { width: 29px; height: 30px; margin-left: 12px; background: #2f2f2f; border-radius: 5px; display: flex; align-items: center; justify-content: center; }
.dt-more svg { width: 16px; height: 10px; }
.subtabs { height: 29px; flex: none; width: 364px; background: #262626; border-top: 1px solid #1e1e1e; border-bottom: 1px solid #1e1e1e; display: flex; align-items: center; padding-left: 11px; font-size: 13px; }
.st { display: flex; align-items: center; gap: 5px; height: 100%; white-space: nowrap; }
.st-on { width: 43px; position: relative; margin-right: 17px; }
.st-on::after { content: ""; position: absolute; left: -11px; right: 0; bottom: -1px; height: 3px; background: #1a4f96; }
.st-paint { width: 110px; }
.st-ic { width: 14px; height: 14px; margin-right: 1px; }
.sq { width: 13px; height: 13px; border: 1px solid #aaa; }
.sq-w { background: #eee; border-color: #eee; }
.modes { height: 28px; flex: none; margin-top: 5px; display: flex; padding-left: 28px; padding-right: 5px; align-items: center; }
.mode { width: 28px; height: 27px; display: flex; align-items: center; justify-content: center; border-radius: 5px; }
.mode-on { background: #1b3f6f; border: 1px solid #13294a; }
.mode i, .m-svg { width: 16px; height: 16px; display: block; }
.flat { background: #eee; }
.m-grad { background: linear-gradient(90deg, #eee 30%, #666); }
.m-rad { background: radial-gradient(#eee 18%, #555 60%); }
.m-mesh { background: conic-gradient(#444 0 25%, #ddd 0 50%, #999 0 75%, #eee 0); border: 1px solid #ddd; }
.m-pat { background: repeating-conic-gradient(#ddd 0 25%, #333 0 50%) 0 0 / 5.300px 5.300px; }
.mode-q { font-size: 17px; font-weight: 700; color: #ddd; }
.modes-space { flex: 1; }
.mode-rule { width: 25px; }
.mode-rule svg { width: 18px; height: 18px; }
.flat-row { height: 32px; flex: none; margin-top: 9px; display: flex; align-items: center; padding-left: 2px; }
.flat-row b { font-size: 13px; flex: 1; margin-top: -2px; }
.dd { width: 103px; height: 32px; margin-right: 7px; background: #2e2e2e; border: 1px solid #1c1c1c; border-radius: 5px; display: flex; align-items: center; padding-left: 11px; gap: 7px; }
.dd span { flex: 1; }
.dd .caret { margin-right: 10px; }
.dd-rb { width: 16px; height: 12px; background: linear-gradient(90deg, #f33, #fc0, #3c3, #0cc, #33f, #c3c); }
.wheel-row { height: 16px; flex: none; margin-top: 6px; display: flex; align-items: center; padding-left: 25px; gap: 7px; font-size: 13px; }
.wheel { width: 16px; height: 16px; border-radius: 50%; background: radial-gradient(#2e2e2e 35%, transparent 37%), conic-gradient(#f00, #ff0, #0f0, #0ff, #00f, #f0f, #f00); }
.cs-row { display: flex; align-items: center; height: 34px; flex: none; padding-left: 22px; margin-bottom: 4px; }
.wheel-row + .cs-row { margin-top: 7px; }
.cs { width: 261px; height: 34px; border-radius: 6px 0 0 6px; position: relative; }
.cs::before, .cs::after { content: ""; position: absolute; left: 0; width: 0; height: 0; border-left: 3px solid transparent; border-right: 3px solid transparent; }
.cs::before { top: 0; border-top: 3px solid #fff; }
.cs::after { bottom: 0; border-bottom: 3px solid #fff; }
.cs-h { background: linear-gradient(90deg, #f00, #ff0 17%, #0f0 33%, #0ff 50%, #00f 67%, #f0f 83%, #f00); }
.cs-s { background: #000; }
.cs-l { background: linear-gradient(90deg, #000, #fff); }
.cs-a {
  border-radius: 0 6px 6px 0;
  background:
    linear-gradient(90deg, rgba(0,0,0,0), #000),
    repeating-conic-gradient(#6e6e6e 0 25%, #a4a4a4 0 50%) 0 0 / 22px 22px;
}
.cs-a::before, .cs-a::after { left: auto; right: 0; }
.spin { width: 71px; height: 33px; margin-left: 4px; border: 1px solid #1e1e1e; border-radius: 5px; display: flex; align-items: center; padding-left: 6px; gap: 3px; font-size: 12.500px; }
.spin span { flex: 1; }
.pm { width: 14px; height: 14px; color: #e8e8e8; }
.pm:last-child { margin-right: 2px; }
.pm.dim { color: #555; }
.rgba-row { height: 33px; flex: none; margin-top: 356px; display: flex; align-items: center; padding-left: 23px; font-size: 13px; }
.target { width: 16px; height: 16px; margin-top: 2px; }
.drop { width: 16px; height: 16px; margin-left: 15px; color: #e6e6e6; margin-top: 2px; }
.rgba-space { flex: 1; }
.rgba-in { width: 73px; height: 33px; margin: 0 7px 0 2px; border: 1px solid #1e1e1e; border-radius: 5px; padding: 8px 0 0 8px; }
.blend-row { border-top: 1px solid #1e1e1e; margin-top: 6px; padding: 4px 3px 0 0; display: flex; justify-content: flex-end; flex: none; }
.blend { width: 109px; height: 30px; border: 1px solid #1e1e1e; border-radius: 5px; }

/* Commands */
.cmds { width: 50px; flex: none; padding-top: 12px; background: #2f2f2f; }
.cmd { height: 35px; display: flex; align-items: center; justify-content: center; padding-left: 6px; }
.cmd svg { width: 16px; height: 16px; }
.cmd-dim { opacity: .25; }
.cmd-sep { display: block; height: 1px; margin: 6px 4px 6px 10px; background: #3a3a3a; }

/* Simulator window */
.sim {
  position: absolute; left: 50px; top: 99px; width: 1806px; height: 760px;
  background: #f6f5f4; border: 1px solid #8f8c88; border-bottom: none; border-radius: 5px 5px 0 0;
  display: flex; flex-direction: column; color: #2e3436; z-index: 2;
}
.sim-title { height: 27px; flex: none; background: #d9d5d1; display: flex; align-items: center; justify-content: center; padding-right: 70px; position: relative; border-radius: 4px 4px 0 0; font-size: 12px; }
.sim-title b { color: #33383a; }
.sim-ic { position: absolute; left: 5px; top: 4px; width: 19px; height: 17px; }
.sim-btns { position: absolute; right: 10px; top: 8px; width: 80px; height: 12px; }
.sim-frame { flex: 1; margin: 0 4px; padding: 5px 3px 0 4px; border: 1px solid #e3e0dc; border-bottom: none; border-radius: 5px 5px 0 0; background: #f6f5f4; display: flex; gap: 6px; min-height: 0; }
.sim-main { width: 1724px; flex: none; display: flex; flex-direction: column; gap: 5px; }
.stage { height: 516px; flex: none; background: #ffba6c; border-radius: 5px; overflow: hidden; }
.stitches { display: block; width: 100%; height: 100%; }
.thread { fill: none; stroke: #111; stroke-width: 2.400; stroke-linejoin: round; }
.thin { stroke-width: 1.900; }
.cross { fill: none; stroke: #8d8d85; stroke-width: 1.500; }
.ruler-mark { fill: none; stroke: #777; stroke-width: 1; }
.scale-txt { font-family: "Liberation Sans", sans-serif; font-size: 15px; fill: #111; }

.scrub { flex: 1; border: 1px solid #d8d4cf; border-bottom: none; border-radius: 5px 5px 0 0; min-height: 0; }
.scrub-top { display: flex; align-items: flex-start; padding: 10px 0 0 25px; height: 109px; }
.slider { width: 1498px; height: 35px; position: relative; }
.bar { position: absolute; left: 0; top: 20px; width: 1491px; height: 15px; background: #000; border-top: 1px solid #aaa; }
.handle { position: absolute; right: 0; top: 0; width: 14px; height: 14px; background: #000; }
.handle::after { content: ""; position: absolute; left: 6px; top: 14px; width: 2px; height: 21px; background: #333; }
.num { width: 100px; height: 34px; margin: 25px 0 0 18px; background: #fff; border: 1px solid #cdc7c2; border-radius: 5px; padding: 9px 0 0 9px; font-size: 12px; color: #222; }
.of { margin: 25px 0 0 11px; font-size: 12px; color: #2e3f5c; }

.frame { margin: 0; border: 1px solid #cfcbc6; padding: 0; min-width: 0; }
.frame legend { padding: 0 2px 0 0; font-size: 13px; line-height: 16px; color: #2e3a46; }
.ctl-row { display: flex; gap: 6px; padding-left: 10px; }
.f-ctl { width: 981px; height: 85px; }
.f-spd { width: 714px; height: 85px; display: flex; flex-direction: column; align-items: center; }
.ctl-btns { display: flex; justify-content: center; gap: 4.800px; padding-top: 14px; }
.spd-btns { display: flex; gap: 4px; padding-top: 2px; }
.btn {
  width: 49px; height: 40px; padding: 0; display: flex; align-items: center; justify-content: center;
  background: linear-gradient(#f6f5f4, #edebe9); border: 1px solid #cdc7c2; border-radius: 5px; flex: none;
}
.b-first { width: 51px; }
.spd-btns .btn { width: 50px; }
.btn svg { width: 24px; height: 24px; fill: none; stroke: #111; }
.btn .solid { fill: #111; stroke: none; }
.spd-txt { font-size: 13px; line-height: 15px; margin-top: 7px; color: #2e3436; }

.sim-side { width: 58px; flex: none; display: flex; flex-direction: column; gap: 10px; margin-top: -3px; }
.side-f { display: flex; flex-direction: column; gap: 4px; padding: 5px 4px 5px 3px; }
.side-b svg { width: 28px; height: 28px; }
.side-b { width: 49px; }
.side-sw { height: 33px; }
.swatch { width: 40px; height: 24px; background: #ffba6c; border: 1px solid #c98f4d; display: block; }
.side-sel { background: #cfcbc6; border-color: #cfcbc6; }
.shadow-sq { width: 23px; height: 23px; background: #fff; border: 1px solid #222; box-shadow: 2px 2px 2px #111; display: block; }

/* On-screen keys */
.keys { height: 165px; flex: none; background: #000; display: grid; grid-template-columns: repeat(9, 1fr); grid-template-rows: repeat(2, 1fr); color: #fff; font-family: Roboto, sans-serif; font-size: 31px; }
.key { display: flex; align-items: center; justify-content: center; }
.key-a { font-family: "Liberation Sans", sans-serif; font-size: 30px; will-change: transform; }
.k-del { width: 32px; height: 22px; }
.k-gear { width: 28px; height: 28px; }
.k-tab { width: 20px; height: 16px; }
.k-kbd { width: 30px; height: 23px; }
```
